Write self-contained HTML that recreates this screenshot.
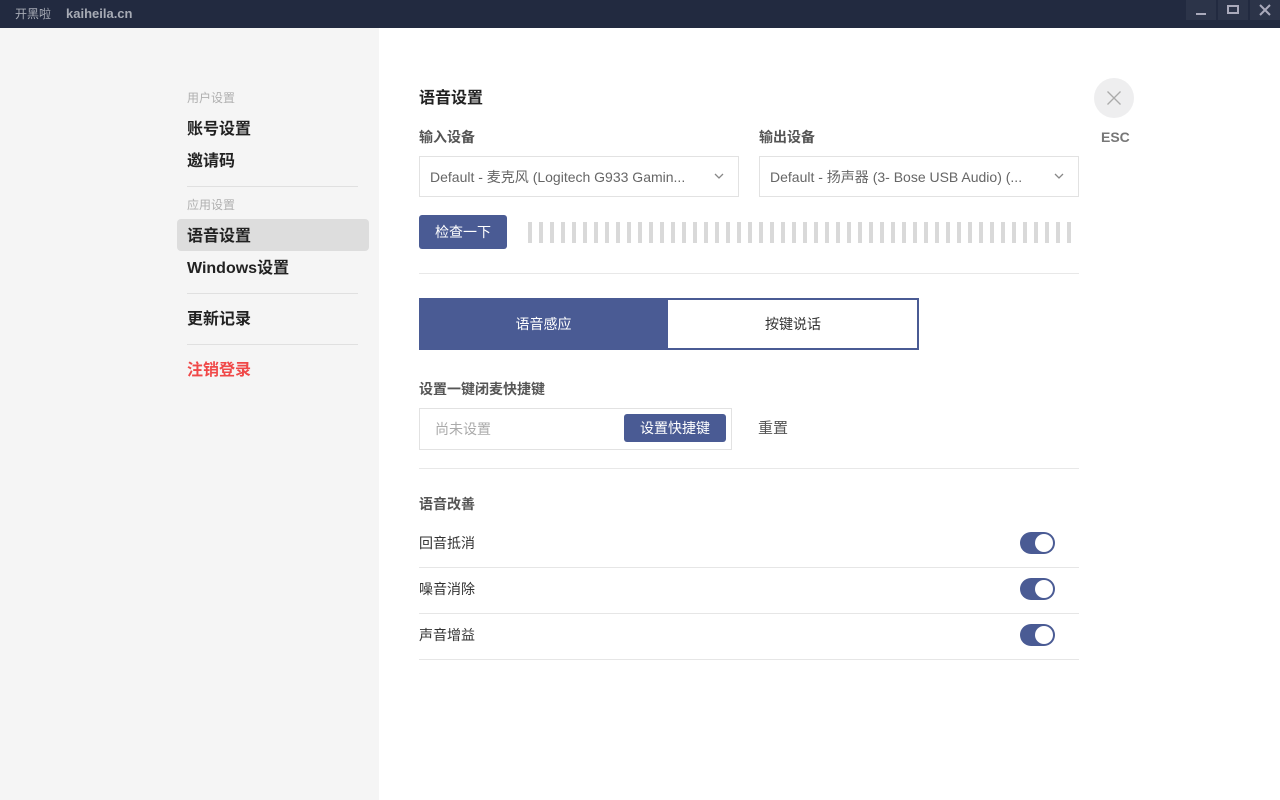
<!DOCTYPE html>
<html><head><meta charset="utf-8"><style>
*{margin:0;padding:0;box-sizing:border-box}
body{width:1280px;height:800px;overflow:hidden;font-family:"Liberation Sans","Noto Sans CJK SC",sans-serif;background:#fff;position:relative;color:#222;line-height:1.2}
.a{position:absolute}
.tb{left:0;top:0;width:1280px;height:28px;background:#222a40}
.tb span{position:absolute;top:6px;font-size:13px;color:#a7abb5;font-weight:bold}
.wb{top:0;width:30px;height:20px;background:#2c3449}
.side{left:0;top:28px;width:379px;height:772px;background:#f5f5f5}
.sm{font-size:12px;color:#b0b0b0}
.si{font-size:16px;font-weight:bold;color:#222}
.hr{height:1px;background:#e0e0e0}
.lbl{font-size:14px;font-weight:bold;color:#555}
.sel{height:41px;border:1px solid #e2e2e2;font-size:14px;color:#666;padding:12px 10px}
.btn{background:#4a5b94;color:#fff;font-size:14px;border-radius:3px;text-align:center}
.tg{width:35px;height:22px;border-radius:11px;background:#4a5b94}
.tg:after{content:"";position:absolute;right:2px;top:2px;width:18px;height:18px;border-radius:50%;background:#fff}
.row{left:419px;width:660px;height:46px;border-bottom:1px solid #e6e6e6;font-size:14px;color:#333;padding-top:13px}
.chev{position:absolute;right:14px;top:16px}
</style></head><body>
<div class="a tb"><span style="left:15px;top:7px;font-weight:normal;font-size:12px">开黑啦</span><span style="left:66px">kaiheila.cn</span>
<div class="a wb" style="left:1186px"><div class="a" style="left:10px;top:13px;width:10px;height:2px;background:#aab"></div></div>
<div class="a wb" style="left:1218px"><div class="a" style="left:9px;top:5px;width:12px;height:9px;border:2px solid #aab"></div></div>
<div class="a wb" style="left:1250px"><svg class="a" style="left:9px;top:4px" width="12" height="12"><path d="M1 1L11 11M11 1L1 11" stroke="#aab" stroke-width="2"/></svg></div>
</div>
<div class="a side">
<div class="a sm" style="left:187px;top:63px">用户设置</div>
<div class="a si" style="left:187px;top:92px">账号设置</div>
<div class="a si" style="left:187px;top:124px">邀请码</div>
<div class="a hr" style="left:187px;top:158px;width:171px"></div>
<div class="a sm" style="left:187px;top:170px">应用设置</div>
<div class="a" style="left:177px;top:191px;width:192px;height:32px;background:#dddddd;border-radius:4px"></div>
<div class="a si" style="left:187px;top:199px">语音设置</div>
<div class="a si" style="left:187px;top:231px">Windows设置</div>
<div class="a hr" style="left:187px;top:265px;width:171px"></div>
<div class="a si" style="left:187px;top:282px">更新记录</div>
<div class="a hr" style="left:187px;top:316px;width:171px"></div>
<div class="a si" style="left:187px;top:333px;color:#f04848">注销登录</div>
</div>
<div class="a" style="left:419px;top:89px;font-size:16px;font-weight:bold">语音设置</div>
<div class="a lbl" style="left:419px;top:129px">输入设备</div>
<div class="a lbl" style="left:759px;top:129px">输出设备</div>
<div class="a sel" style="left:419px;top:156px;width:320px">Default - 麦克风 (Logitech G933 Gamin...<svg class="chev" width="10" height="7"><path d="M1 1L5 5L9 1" stroke="#888" fill="none" stroke-width="1.3"/></svg></div>
<div class="a sel" style="left:759px;top:156px;width:320px">Default - 扬声器 (3- Bose USB Audio) (...<svg class="chev" width="10" height="7"><path d="M1 1L5 5L9 1" stroke="#888" fill="none" stroke-width="1.3"/></svg></div>
<div class="a btn" style="left:419px;top:215px;width:88px;height:34px;padding-top:9px">检查一下</div>
<div class="a" style="left:528px;top:222px;width:550px;height:21px;background:repeating-linear-gradient(90deg,#d9d9d9 0 4px,transparent 4px 11px)"></div>
<div class="a hr" style="left:419px;top:273px;width:660px;background:#e8e8e8"></div>
<div class="a" style="left:419px;top:298px;width:500px;height:52px;border:2px solid #4a5b94"></div>
<div class="a" style="left:419px;top:298px;width:249px;height:52px;background:#4a5b94;color:#fff;font-size:14px;text-align:center;padding-top:18px">语音感应</div>
<div class="a" style="left:668px;top:316px;width:250px;font-size:14px;text-align:center;color:#333">按键说话</div>
<div class="a lbl" style="left:419px;top:381px">设置一键闭麦快捷键</div>
<div class="a" style="left:419px;top:408px;width:313px;height:42px;border:1px solid #e2e2e2"></div>
<div class="a" style="left:435px;top:421px;font-size:14px;color:#aaa">尚未设置</div>
<div class="a btn" style="left:624px;top:414px;width:102px;height:28px;padding-top:6px">设置快捷键</div>
<div class="a" style="left:758px;top:420px;font-size:15px;color:#555">重置</div>
<div class="a hr" style="left:419px;top:468px;width:660px;background:#e8e8e8"></div>
<div class="a lbl" style="left:419px;top:496px">语音改善</div>
<div class="a row" style="top:522px">回音抵消<div class="a tg" style="left:601px;top:10px"></div></div>
<div class="a row" style="top:568px">噪音消除<div class="a tg" style="left:601px;top:10px"></div></div>
<div class="a row" style="top:614px">声音增益<div class="a tg" style="left:601px;top:10px"></div></div>
<div class="a" style="left:1094px;top:78px;width:40px;height:40px;border-radius:50%;background:#eeeeef"><svg class="a" style="left:13px;top:13px" width="14" height="14"><path d="M0.5 0.5L13.5 13.5M13.5 0.5L0.5 13.5" stroke="#aaa" stroke-width="1.3"/></svg></div>
<div class="a" style="left:1101px;top:129px;font-size:14px;font-weight:bold;color:#777">ESC</div>
</body></html>
